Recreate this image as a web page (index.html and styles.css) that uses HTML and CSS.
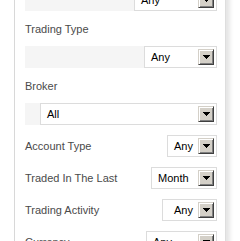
FILE: index.html
```html
<!DOCTYPE html>
<html lang="en">
<head>
    <meta charset="UTF-8">
    <meta name="viewport" content="width=device-width, initial-scale=1.0">
    <title>Trader Filters</title>
    <link rel="stylesheet" href="styles.css">
</head>
<body>
    <div class="panel">
        <div class="band">
            <div class="select w83"><span class="value">Any</span><span class="arrow"><svg width="7" height="4" viewBox="0 0 7 4" shape-rendering="crispEdges"><path d="M0 0h7v1h-1v1h-1v1h-1v1h-1v-1h-1v-1h-1v-1h-1z" fill="#000"/></svg></span></div>
        </div>

        <div class="label">Trading Type</div>
        <div class="band">
            <div class="select w73"><span class="value">Any</span><span class="arrow"><svg width="7" height="4" viewBox="0 0 7 4" shape-rendering="crispEdges"><path d="M0 0h7v1h-1v1h-1v1h-1v1h-1v-1h-1v-1h-1v-1h-1z" fill="#000"/></svg></span></div>
        </div>

        <div class="label">Broker</div>
        <div class="band">
            <div class="select w177"><span class="value">All</span><span class="arrow"><svg width="7" height="4" viewBox="0 0 7 4" shape-rendering="crispEdges"><path d="M0 0h7v1h-1v1h-1v1h-1v1h-1v-1h-1v-1h-1v-1h-1z" fill="#000"/></svg></span></div>
        </div>

        <div class="row">
            <span class="row-label">Account Type</span>
            <div class="select w50"><span class="value">Any</span><span class="arrow"><svg width="7" height="4" viewBox="0 0 7 4" shape-rendering="crispEdges"><path d="M0 0h7v1h-1v1h-1v1h-1v1h-1v-1h-1v-1h-1v-1h-1z" fill="#000"/></svg></span></div>
        </div>
        <div class="row">
            <span class="row-label">Traded In The Last</span>
            <div class="select w66"><span class="value">Month</span><span class="arrow"><svg width="7" height="4" viewBox="0 0 7 4" shape-rendering="crispEdges"><path d="M0 0h7v1h-1v1h-1v1h-1v1h-1v-1h-1v-1h-1v-1h-1z" fill="#000"/></svg></span></div>
        </div>
        <div class="row">
            <span class="row-label">Trading Activity</span>
            <div class="select w55 wide-pad"><span class="value">Any</span><span class="arrow"><svg width="7" height="4" viewBox="0 0 7 4" shape-rendering="crispEdges"><path d="M0 0h7v1h-1v1h-1v1h-1v1h-1v-1h-1v-1h-1v-1h-1z" fill="#000"/></svg></span></div>
        </div>
        <div class="row">
            <span class="row-label">Currency</span>
            <div class="select w71"><span class="value">Any</span><span class="arrow"><svg width="7" height="4" viewBox="0 0 7 4" shape-rendering="crispEdges"><path d="M0 0h7v1h-1v1h-1v1h-1v1h-1v-1h-1v-1h-1v-1h-1z" fill="#000"/></svg></span></div>
        </div>
    </div>
</body>
</html>
```

FILE: styles.css
```css
body { margin: 0; background: #fff; font-family: "Liberation Sans", Arial, sans-serif; font-size: 11px; overflow: hidden; }
.panel { width: 192px; margin: -11px 0 0 14px; padding: 0 8px 20px 10px; background: #fff; border-left: 1px solid #d8d8d8; border-right: 1px solid #dedede; box-shadow: 4px 0 4px rgba(0, 0, 0, 0.1); display: flex; flex-direction: column; gap: 10px; }
.label { color: #4a4a4a; line-height: 13px; margin-top: 2px; }
.band { background: #f5f5f5; display: flex; justify-content: flex-end; }
.row { display: flex; justify-content: space-between; align-items: center; }
.row-label { color: #4a4a4a; line-height: 13px; }
.select { box-sizing: border-box; height: 22px; border: 1px solid #dcdcdc; background: #fff; display: flex; align-items: center; padding: 0 2px 0 6px; color: #000; }
.select .value { flex: 1; line-height: 13px; }
.wide-pad { padding-left: 11px; }
.arrow { box-sizing: border-box; width: 16px; height: 16px; background: #d4d0c8; border: 1px solid; border-color: #d4d0c8 #404040 #404040 #d4d0c8; box-shadow: inset 1px 1px #fff, inset -1px -1px #808080; display: flex; align-items: center; justify-content: center; }
.arrow svg { display: block; }
.w50 { width: 50px; }
.w55 { width: 55px; }
.w66 { width: 66px; }
.w71 { width: 71px; }
.w73 { width: 73px; }
.w83 { width: 83px; }
.w177 { width: 177px; }
```
